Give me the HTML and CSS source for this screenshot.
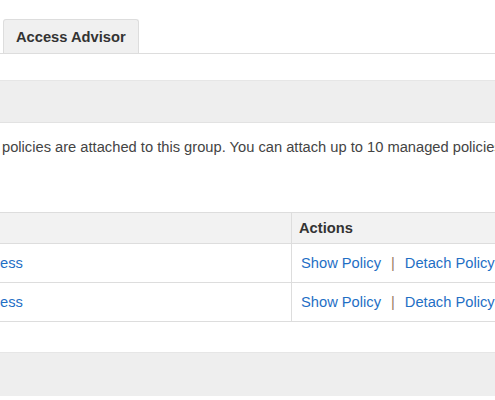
FILE: index.html
```html
<!DOCTYPE html>
<html>
<head>
<meta charset="utf-8">
<link rel="stylesheet" href="styles.css">
</head>
<body>
<div class="page">
  <div class="tabs">
    <div class="tab">Access Advisor</div>
  </div>
  <div class="panel-head"></div>
  <p class="intro">policies are attached to this group. You can attach up to 10 managed policies.</p>
  <table class="grid">
    <thead>
      <tr><th class="c1"></th><th class="c2">Actions</th></tr>
    </thead>
    <tbody>
      <tr><td class="c1"><a href="#">ess</a></td><td class="c2"><a href="#">Show Policy</a><span class="sep">|</span><a href="#">Detach Policy</a></td></tr>
      <tr><td class="c1"><a href="#">ess</a></td><td class="c2"><a href="#">Show Policy</a><span class="sep">|</span><a href="#">Detach Policy</a></td></tr>
    </tbody>
  </table>
  <div class="panel-foot"></div>
</div>
</body>
</html>
```

FILE: styles.css
```css
html, body {
  margin: 0;
  padding: 0;
  background: #fff;
  overflow: hidden;
}
.page {
  width: 495px;
  height: 400px;
  overflow: hidden;
  font-family: "Liberation Sans", Arial, sans-serif;
  font-size: 14.7px;
  color: #444;
}
.tabs {
  padding: 19px 0 0 3px;
  border-bottom: 1px solid #ddd;
  display: flex;
}
.tab {
  height: 33px;
  line-height: 35px;
  padding: 0 12px;
  background: #f0f0f0;
  border: 1px solid #ddd;
  border-bottom: none;
  border-radius: 3px 3px 0 0;
  font-weight: bold;
  color: #333;
  width: 110px;
}
.panel-head {
  margin-top: 26px;
  height: 41px;
  background: #eee;
  border-top: 1px solid #e6e6e6;
  border-bottom: 1px solid #e2e2e2;
}
.intro {
  margin: 16px 0 0 2px;
  white-space: nowrap;
  line-height: 17px;
}
.grid {
  margin-top: 56px;
  border-collapse: collapse;
  width: 580px;
  table-layout: fixed;
}
.grid th, .grid td {
  text-align: left;
  border-top: 1px solid #ddd;
  border-bottom: 1px solid #ddd;
  white-space: nowrap;
  padding: 0;
}
.grid th {
  background: #f2f2f2;
  height: 30px;
  font-weight: bold;
  color: #333;
}
.grid td {
  height: 38px;
}
.grid .c1 {
  width: 291px;
  border-right: 1px solid #ddd;
}
.grid th.c2 { padding-left: 7px; }
.grid td.c2 { padding-left: 9px; }
.grid a {
  color: #1f6fc5;
  text-decoration: none;
}
.sep {
  color: #9a7b62;
  margin: 0 10px;
}
.panel-foot {
  margin-top: 30px;
  height: 43px;
  background: #eee;
  border-top: 1px solid #e6e6e6;
}
```
